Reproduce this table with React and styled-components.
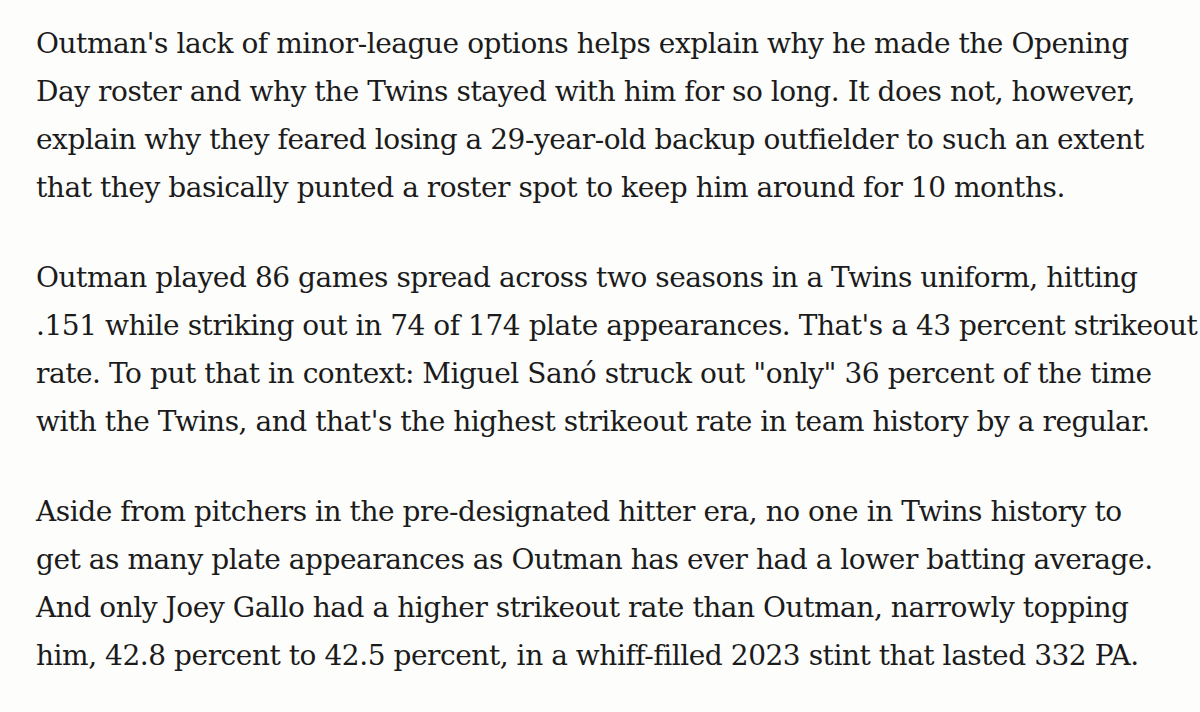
import React from "react";
import styled, { createGlobalStyle } from "styled-components";

const Global = createGlobalStyle`
  html, body { margin: 0; padding: 0; background: #fdfdfc; }
  body { -webkit-font-smoothing: antialiased; }
`;

const Article = styled.article`
  padding: 20px 0 0 36px;
  font-family: "DejaVu Serif", "Liberation Serif", serif;
  font-size: 28px;
  line-height: 48px;
  color: #1b1b1b;
  letter-spacing: -0.45px;
`;

const Paragraph = styled.p`
  margin: 0 0 42px 0;
`;

const Line = styled.span`
  display: block;
  white-space: nowrap;
`;

const paragraphs = [
  [
    "Outman's lack of minor-league options helps explain why he made the Opening",
    "Day roster and why the Twins stayed with him for so long. It does not, however,",
    "explain why they feared losing a 29-year-old backup outfielder to such an extent",
    "that they basically punted a roster spot to keep him around for 10 months.",
  ],
  [
    "Outman played 86 games spread across two seasons in a Twins uniform, hitting",
    ".151 while striking out in 74 of 174 plate appearances. That's a 43 percent strikeout",
    "rate. To put that in context: Miguel Sanó struck out \"only\" 36 percent of the time",
    "with the Twins, and that's the highest strikeout rate in team history by a regular.",
  ],
  [
    "Aside from pitchers in the pre-designated hitter era, no one in Twins history to",
    "get as many plate appearances as Outman has ever had a lower batting average.",
    "And only Joey Gallo had a higher strikeout rate than Outman, narrowly topping",
    "him, 42.8 percent to 42.5 percent, in a whiff-filled 2023 stint that lasted 332 PA.",
  ],
];

export default function App() {
  return (
    <>
      <Global />
      <Article>
        {paragraphs.map((lines, i) => (
          <Paragraph key={i}>
            {lines.map((l, j) => (
              <Line key={j}>{l}</Line>
            ))}
          </Paragraph>
        ))}
      </Article>
    </>
  );
}
